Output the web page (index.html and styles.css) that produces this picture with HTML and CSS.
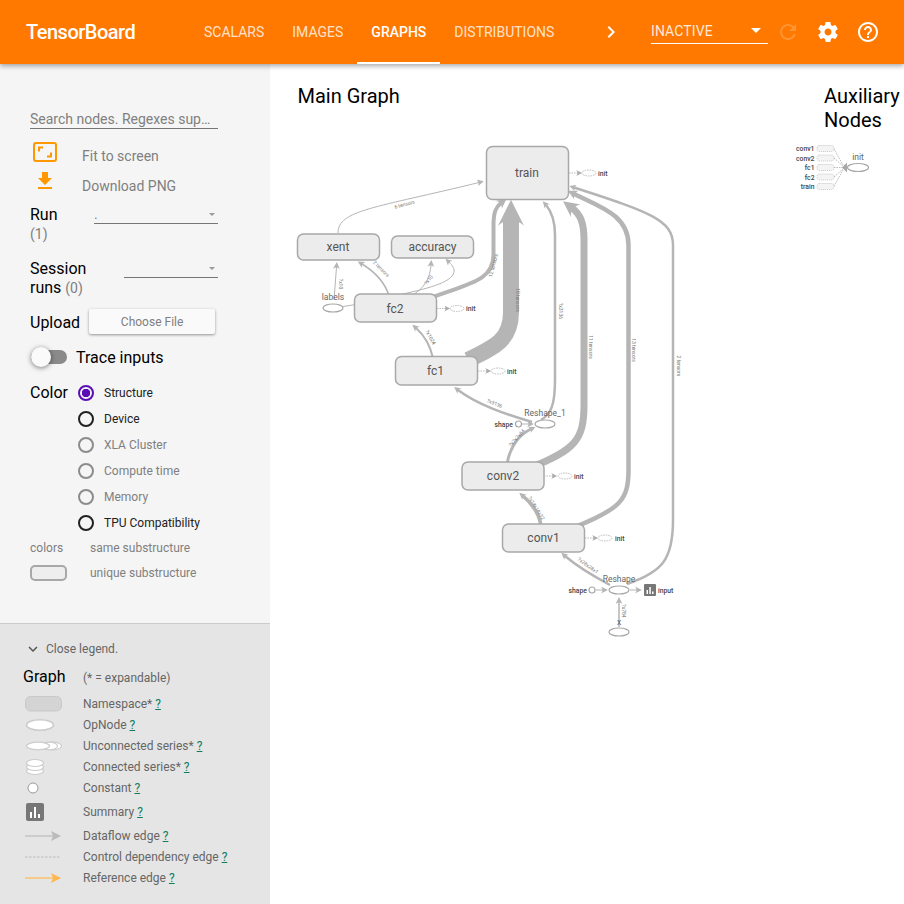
FILE: index.html
```html
<!DOCTYPE html>
<html lang="en">
<head>
    <meta charset="UTF-8">
    <meta name="viewport" content="width=device-width, initial-scale=1.0">
    <title>TensorBoard</title>
    <link rel="stylesheet" href="styles.css">
</head>
<body>

    <header class="topbar">
        <div class="brand">TensorBoard</div>
        <nav class="tabs">
            <a class="tab">SCALARS</a>
            <a class="tab">IMAGES</a>
            <a class="tab active">GRAPHS</a>
            <a class="tab">DISTRIBUTIONS</a>
        </nav>
        <svg class="more" viewBox="0 0 24 24"><path d="M10 6L8.59 7.41 13.17 12l-4.58 4.59L10 18l6-6z"/></svg>
        <div class="plugin-select">
            <span>INACTIVE</span>
            <i class="caret caret-white"></i>
        </div>
        <svg class="top-icon faded" viewBox="0 0 24 24"><path d="M17.65 6.35C16.2 4.9 14.21 4 12 4c-4.42 0-7.99 3.58-7.99 8s3.57 8 7.99 8c3.73 0 6.84-2.55 7.73-6h-2.08c-.82 2.33-3.04 4-5.65 4-3.31 0-6-2.69-6-6s2.69-6 6-6c1.66 0 3.14.69 4.22 1.78L13 11h7V4l-2.35 2.35z"/></svg>
        <svg class="top-icon" viewBox="0 0 24 24"><path d="M19.43 12.98c.04-.32.07-.64.07-.98s-.03-.66-.07-.98l2.11-1.65c.19-.15.24-.42.12-.64l-2-3.46c-.12-.22-.39-.3-.61-.22l-2.49 1c-.52-.4-1.08-.73-1.69-.98l-.38-2.65C14.46 2.18 14.25 2 14 2h-4c-.25 0-.46.18-.49.42l-.38 2.65c-.61.25-1.17.59-1.69.98l-2.49-1c-.23-.09-.49 0-.61.22l-2 3.46c-.13.22-.07.49.12.64l2.11 1.65c-.04.32-.07.65-.07.98s.03.66.07.98l-2.11 1.65c-.19.15-.24.42-.12.64l2 3.46c.12.22.39.3.61.22l2.49-1c.52.4 1.08.73 1.69.98l.38 2.65c.03.24.24.42.49.42h4c.25 0 .46-.18.49-.42l.38-2.65c.61-.25 1.17-.59 1.69-.98l2.49 1c.23.09.49 0 .61-.22l2-3.46c.12-.22.07-.49-.12-.64l-2.11-1.65zM12 15.5c-1.93 0-3.5-1.57-3.5-3.5s1.57-3.5 3.5-3.5 3.5 1.57 3.5 3.5-1.57 3.5-3.5 3.5z"/></svg>
        <svg class="top-icon" viewBox="0 0 24 24"><path d="M11 18h2v-2h-2v2zm1-16C6.48 2 2 6.48 2 12s4.48 10 10 10 10-4.48 10-10S17.52 2 12 2zm0 18c-4.41 0-8-3.59-8-8s3.59-8 8-8 8 3.59 8 8-3.59 8-8 8zm0-14c-2.21 0-4 1.79-4 4h2c0-1.1.9-2 2-2s2 .9 2 2c0 2-3 1.75-3 5h2c0-2.25 3-2.5 3-5 0-2.21-1.79-4-4-4z"/></svg>
    </header>

    <div class="layout">
        <aside class="sidebar">
            <div class="controls">
                <div class="search">Search nodes. Regexes sup…</div>

                <div class="action action-fit">
                    <svg class="action-icon" viewBox="0 0 24 20"><rect x="1" y="1" width="22" height="18" rx="2" class="fit-frame"/><path d="M5 4.5h5v2H7v3H5zM19 15.5h-5v-2h3v-3h2z" class="fit-corner"/></svg>
                    <span>Fit to screen</span>
                </div>
                <div class="action action-download">
                    <svg class="action-icon" viewBox="0 0 24 24"><path d="M19 9h-4V3H9v6H5l7 7 7-7zM5 18v2h14v-2H5z" class="fit-corner"/></svg>
                    <span>Download PNG</span>
                </div>

                <div class="field field-run">
                    <div class="field-label">Run<small>(1)</small></div>
                    <div class="dropdown dropdown-run">.<i class="caret"></i></div>
                </div>
                <div class="field field-session">
                    <div class="field-label">Session<br>runs <small class="inline">(0)</small></div>
                    <div class="dropdown dropdown-session"><i class="caret"></i></div>
                </div>

                <div class="upload">
                    <span>Upload</span>
                    <div class="file-button">Choose File</div>
                </div>

                <div class="trace">
                    <div class="toggle"><i></i></div>
                    <span>Trace inputs</span>
                </div>

                <div class="color-group">
                    <span class="color-title">Color</span>
                    <ul class="radios">
                        <li class="checked"><i></i>Structure</li>
                        <li class="enabled"><i></i>Device</li>
                        <li><i></i>XLA Cluster</li>
                        <li><i></i>Compute time</li>
                        <li><i></i>Memory</li>
                        <li class="enabled"><i></i>TPU Compatibility</li>
                    </ul>
                </div>

                <div class="colors-row colors-row-text"><span>colors</span><span>same substructure</span></div>
                <div class="colors-row"><i class="swatch"></i><span>unique substructure</span></div>
            </div>

            <section class="legend">
                <div class="legend-toggle">
                    <svg viewBox="0 0 24 24"><path d="M16.59 8.59L12 13.17 7.41 8.59 6 10l6 6 6-6z"/></svg>
                    <span>Close legend.</span>
                </div>
                <div class="legend-head"><strong>Graph</strong><span>(* = expandable)</span></div>

                <div class="legend-row">
                    <svg viewBox="0 0 40 18"><rect x="2.500" y="1.500" width="36" height="14.500" rx="5" fill="#d4d4d4" stroke="#c9c9c9" stroke-width="1"/></svg>
                    <span>Namespace* <a>?</a></span>
                </div>
                <div class="legend-row">
                    <svg viewBox="0 0 40 18"><ellipse cx="17" cy="9" rx="13.500" ry="5.200" fill="#fff" stroke="#ccc" stroke-width="1.500"/></svg>
                    <span>OpNode <a>?</a></span>
                </div>
                <div class="legend-row">
                    <svg viewBox="0 0 40 18"><g fill="#fff" stroke="#ccc" stroke-width="1.200"><ellipse cx="30" cy="9" rx="8.500" ry="3.800"/><ellipse cx="26" cy="9" rx="8.500" ry="3.800"/><ellipse cx="15" cy="9" rx="11.500" ry="3.800"/></g></svg>
                    <span>Unconnected series* <a>?</a></span>
                </div>
                <div class="legend-row">
                    <svg viewBox="0 0 40 18"><g fill="#fff" stroke="#ccc" stroke-width="1.200"><ellipse cx="12" cy="13" rx="8.500" ry="3.500"/><ellipse cx="12" cy="9" rx="8.500" ry="3.500"/><ellipse cx="12" cy="5" rx="8.500" ry="3.500"/></g></svg>
                    <span>Connected series* <a>?</a></span>
                </div>
                <div class="legend-row">
                    <svg viewBox="0 0 40 18"><circle cx="10" cy="9" r="5" fill="#fff" stroke="#999"/></svg>
                    <span>Constant <a>?</a></span>
                </div>
                <div class="legend-row legend-row-tall">
                    <svg viewBox="0 0 40 18"><rect x="3" y="0" width="18" height="18" rx="2" fill="#777"/><path d="M7 9h2v6H7zM11 4h2v11h-2zM15 11h2v4h-2z" fill="#fff"/></svg>
                    <span>Summary <a>?</a></span>
                </div>
                <div class="legend-row">
                    <svg viewBox="0 0 40 18"><path d="M2 9H31" stroke="#bbb" stroke-width="1.200"/><path d="M28 4l10 5-10 5 2-5z" fill="#bbb"/></svg>
                    <span>Dataflow edge <a>?</a></span>
                </div>
                <div class="legend-row">
                    <svg viewBox="0 0 40 18"><path d="M2 9H38" stroke="#bbb" stroke-width="1.200" stroke-dasharray="2.500 1.500"/></svg>
                    <span>Control dependency edge <a>?</a></span>
                </div>
                <div class="legend-row">
                    <svg viewBox="0 0 40 18"><path d="M2 9H31" stroke="#ffb74d" stroke-width="1.200"/><path d="M28 4l10 5-10 5 2-5z" fill="#ffb74d"/></svg>
                    <span>Reference edge <a>?</a></span>
                </div>
            </section>
        </aside>

        <main class="canvas">
            <div class="canvas-headings">
                <h2>Main Graph</h2>
                <h2 class="aux-title">Auxiliary Nodes</h2>
            </div>

            <svg class="graph" viewBox="270 64 634 840">
                <defs>
                    <marker id="arrow-sm" markerUnits="userSpaceOnUse" viewBox="0 0 10 10" refX="3" refY="5" markerWidth="8" markerHeight="7" orient="auto"><path d="M0 0L10 5L0 10C3 7 3 3 0 0" fill="#b5b5b5"/></marker>
                    <marker id="arrow-md" markerUnits="userSpaceOnUse" viewBox="0 0 10 10" refX="3" refY="5" markerWidth="11" markerHeight="10" orient="auto"><path d="M0 0L10 5L0 10C3 7 3 3 0 0" fill="#b5b5b5"/></marker>
                    <marker id="arrow-lg" markerUnits="userSpaceOnUse" viewBox="0 0 10 10" refX="3" refY="5" markerWidth="18" markerHeight="16" orient="auto"><path d="M0 0L10 5L0 10C3 7 3 3 0 0" fill="#b5b5b5"/></marker>
                    <marker id="arrow-xl" markerUnits="userSpaceOnUse" viewBox="0 0 10 10" refX="3" refY="5" markerWidth="26" markerHeight="26" orient="auto"><path d="M0 0L10 5L0 10C3 7 3 3 0 0" fill="#b5b5b5"/></marker>
                    <marker id="arrow-ctl" markerUnits="userSpaceOnUse" viewBox="0 0 10 10" refX="3" refY="5" markerWidth="6" markerHeight="6" orient="auto"><path d="M0 0L10 5L0 10C3 7 3 3 0 0" fill="#aaa"/></marker>
                </defs>

                <!-- dataflow edges -->
                <g class="edges">
                    <path d="M338 233C338 210 375 208 479 182.500" stroke-width="1" marker-end="url(#arrow-sm)"/>
                    <path d="M430 298C470 283 493 281 493.500 255V225C493.500 212 496 207 501 203" stroke-width="4" marker-end="url(#arrow-md)"/>
                    <path d="M468 360C495 347 511 340 511 312V218" stroke-width="16" marker-end="url(#arrow-xl)"/>
                    <path d="M541 420C551 414 555 405 555 380V235C555 220 552 212 546 205" stroke-width="2.500" marker-end="url(#arrow-sm)"/>
                    <path d="M530 468C575 450 584 440 584 405V240C584 222 580 214 572 208" stroke-width="7" marker-end="url(#arrow-lg)"/>
                    <path d="M575 527C620 509 628.500 500 628.500 470V245C628.500 215 600 207 574 194" stroke-width="4.500" marker-end="url(#arrow-md)"/>
                    <path d="M627 584C662 572 673 560 673 520V245C673 220 650 212 574 187.500" stroke-width="2.500" marker-end="url(#arrow-sm)"/>

                    <path d="M433 358C430 345 424 335 416 328" stroke-width="2" marker-end="url(#arrow-sm)"/>
                    <path d="M389 296C385 282 375 272 362 264" stroke-width="1.500" marker-end="url(#arrow-sm)"/>
                    <path d="M411 296C425 288 430 278 431 265" stroke-width="1" marker-end="url(#arrow-sm)"/>
                    <path d="M394 296C430 288 468 280 449 262" stroke-width="1" marker-end="url(#arrow-sm)"/>
                    <path d="M334 300L336.500 267" stroke-width="1" marker-end="url(#arrow-sm)"/>
                    <path d="M343 306.500L356 304.500" stroke-width="1"/>

                    <path d="M532 422C505 414 478 405 458 390" stroke-width="2.500" marker-end="url(#arrow-sm)"/>
                    <path d="M507 464C510 446 520 434 531 429" stroke-width="3" marker-end="url(#arrow-sm)"/>
                    <path d="M541 526C539 512 530 502 523 496" stroke-width="3.500" marker-end="url(#arrow-sm)"/>
                    <path d="M610 585C595 577 578 567 565 556" stroke-width="2.500" marker-end="url(#arrow-sm)"/>
                    <path d="M522 424H529" stroke-width="1" marker-end="url(#arrow-sm)"/>
                    <path d="M596 590H603" stroke-width="1" marker-end="url(#arrow-sm)"/>
                    <path d="M630 590H637" stroke-width="1" marker-end="url(#arrow-sm)"/>
                    <path d="M619 627V602" stroke-width="1.500" marker-end="url(#arrow-sm)"/>
                </g>

                <!-- edge sizes -->
                <g class="edge-labels">
                    <text transform="translate(405 206) rotate(-15)">6 tensors</text>
                    <text transform="translate(495 266) rotate(-75)">12 tensors</text>
                    <text transform="translate(516 300) rotate(90)">10 tensors</text>
                    <text transform="translate(559 311) rotate(90)">?x3136</text>
                    <text transform="translate(589 347) rotate(90)">11 tensors</text>
                    <text transform="translate(632 350) rotate(90)">13 tensors</text>
                    <text transform="translate(677 366) rotate(90)">2 tensors</text>
                    <text transform="translate(429 338) rotate(62)">?x1024</text>
                    <text transform="translate(494 405) rotate(22)">?x3136</text>
                    <text transform="translate(518 439) rotate(-48)">?x7x7x64</text>
                    <text transform="translate(535 509) rotate(58)">?x14x14x32</text>
                    <text transform="translate(587 567) rotate(36)">?x28x28x1</text>
                    <text transform="translate(622 611) rotate(90)">?x784</text>
                    <text transform="translate(339 284) rotate(90)">?x10</text>
                    <text transform="translate(380 270) rotate(45)">2 tensors</text>
                    <text transform="translate(430 281) rotate(-50)">?x10</text>
                </g>

                <!-- namespace nodes -->
                <g class="nodes">
                    <rect x="486.500" y="146.500" width="82" height="53" rx="6"/>
                    <rect x="297.500" y="234" width="82" height="26" rx="6"/>
                    <rect x="391.500" y="236" width="82" height="22" rx="6"/>
                    <rect x="354.500" y="294" width="82" height="28" rx="6"/>
                    <rect x="395.500" y="356.500" width="82" height="28.500" rx="6"/>
                    <rect x="462" y="462" width="82" height="28" rx="6"/>
                    <rect x="502.500" y="524" width="82" height="28" rx="6"/>
                </g>
                <g class="node-names">
                    <text x="527" y="177">train</text>
                    <text x="338" y="251">xent</text>
                    <text x="432.500" y="251">accuracy</text>
                    <text x="395" y="313">fc2</text>
                    <text x="435.500" y="375">fc1</text>
                    <text x="503" y="480">conv2</text>
                    <text x="543.500" y="542">conv1</text>
                </g>

                <!-- op nodes -->
                <g class="ops">
                    <ellipse cx="333" cy="308" rx="10" ry="4"/>
                    <ellipse cx="545" cy="424" rx="10" ry="4"/>
                    <ellipse cx="619" cy="590" rx="10" ry="4"/>
                    <ellipse cx="619" cy="632" rx="10" ry="4"/>
                    <circle cx="518.500" cy="424" r="3"/>
                    <circle cx="592" cy="590" r="3"/>
                </g>
                <g class="op-names">
                    <text x="333" y="300">labels</text>
                    <text x="545" y="416">Reshape_1</text>
                    <text x="619" y="582">Reshape</text>
                    <text x="619" y="625">x</text>
                </g>

                <!-- summary input -->
                <rect x="644" y="584" width="12" height="12" rx="1" fill="#777"/>
                <path d="M646.500 590h1.500v4h-1.500zM649.300 587h1.500v7h-1.500zM652 591.500h1.500v2.500H652z" fill="#fff"/>

                <!-- init stubs -->
                <g class="ctl">
                    <path d="M569 173H578" marker-end="url(#arrow-ctl)"/>
                    <ellipse cx="589" cy="173" rx="7" ry="3"/>
                    <path d="M437 308.500H446" marker-end="url(#arrow-ctl)"/>
                    <ellipse cx="457" cy="308.500" rx="7" ry="3"/>
                    <path d="M478 371H487" marker-end="url(#arrow-ctl)"/>
                    <ellipse cx="498" cy="371" rx="7" ry="3"/>
                    <path d="M544 476H553" marker-end="url(#arrow-ctl)"/>
                    <ellipse cx="565" cy="476" rx="7" ry="3"/>
                    <path d="M585 538H594" marker-end="url(#arrow-ctl)"/>
                    <ellipse cx="605" cy="538" rx="7" ry="3"/>
                </g>
                <g class="stub-names">
                    <text x="598" y="175.500">init</text>
                    <text x="466" y="311">init</text>
                    <text x="507" y="373.500">init</text>
                    <text x="574" y="478.500">init</text>
                    <text x="615" y="540.500">init</text>
                    <text x="658" y="592.500">input</text>
                    <text x="513" y="426.500" class="end">shape</text>
                    <text x="587" y="592.500" class="end">shape</text>
                </g>

                <!-- auxiliary nodes -->
                <g class="ctl">
                    <path d="M834 149L843 165M834 158L843 166M834 167.500H843M834 177L843 169M834 186L843 170"/>
                </g>
                <g class="aux-stubs">
                    <rect x="817" y="145.500" width="17" height="6" rx="2.500"/>
                    <rect x="817" y="155" width="17" height="6" rx="2.500"/>
                    <rect x="817" y="164.500" width="17" height="6" rx="2.500"/>
                    <rect x="817" y="174" width="17" height="6" rx="2.500"/>
                    <rect x="817" y="183.500" width="17" height="6" rx="2.500"/>
                </g>
                <path d="M842 167.500L847 162.500V172.500Z" fill="#a8a8a8"/>
                <ellipse cx="858" cy="167.500" rx="10.500" ry="4" class="aux-op"/>
                <g class="stub-names">
                    <text x="814.500" y="150.500" class="end">conv1</text>
                    <text x="814.500" y="160.500" class="end">conv2</text>
                    <text x="814.500" y="169.500" class="end">fc1</text>
                    <text x="814.500" y="179.500" class="end">fc2</text>
                    <text x="814.500" y="188.500" class="end">train</text>
                </g>
                <text x="858" y="159.500" class="aux-name">init</text>
            </svg>
        </main>
    </div>

</body>
</html>
```

FILE: styles.css
```css
* {
    box-sizing: border-box;
}

html, body {
    margin: 0;
    height: 100%;
}

body {
    font-family: Roboto, "Liberation Sans", sans-serif;
    width: 904px;
    height: 904px;
    overflow: hidden;
    background: #fff;
    display: flex;
    flex-direction: column;
}

/* top bar */
.topbar {
    height: 64px;
    flex: none;
    background: #ff7900;
    color: #fff;
    display: flex;
    align-items: center;
    padding-left: 26px;
    box-shadow: 0 2px 5px rgba(0, 0, 0, 0.35);
    position: relative;
    z-index: 2;
}

.brand {
    font-size: 20px;
    font-weight: 500;
    letter-spacing: -0.5px;
    width: 164px;
    flex: none;
}

.tabs {
    display: flex;
    height: 64px;
    width: 404px;
    flex: none;
}

.tab {
    font-size: 14px;
    font-weight: 400;
    color: rgba(255, 255, 255, 0.8);
    padding: 0 14px;
    display: flex;
    align-items: center;
    border-bottom: 2px solid transparent;
    border-top: 2px solid transparent;
}

.tab.active {
    color: #fff;
    font-weight: 500;
    border-bottom-color: #fff;
}

.more {
    width: 24px;
    height: 24px;
    fill: #fff;
    flex: none;
    margin-left: 5px;
}

.plugin-select {
    width: 117px;
    height: 29px;
    margin-left: 28px;
    border-bottom: 1px solid #fff;
    display: flex;
    align-items: center;
    justify-content: space-between;
    font-size: 14px;
    letter-spacing: 0.1px;
    color: rgba(255, 255, 255, 0.85);
    padding: 3px 7px 0 0;
    flex: none;
    position: relative;
    top: -2.500px;
}

.caret {
    width: 0;
    height: 0;
    border-left: 5px solid transparent;
    border-right: 5px solid transparent;
    border-top: 5px solid #808080;
    display: block;
}

.caret-white {
    border-top-color: #fff;
}

.top-icon {
    width: 24px;
    height: 24px;
    fill: #fff;
    flex: none;
    margin-left: 16px;
}

.top-icon.faded {
    opacity: 0.2;
    margin-left: 8px;
}

/* sidebar */
.layout {
    flex: 1;
    display: flex;
    min-height: 0;
}

.sidebar {
    width: 270px;
    flex: none;
    background: #f5f5f5;
    display: flex;
    flex-direction: column;
}

.controls {
    flex: 1;
    padding: 47px 52px 0 30px;
    font-size: 14px;
    color: #808080;
}

.search {
    height: 18px;
    line-height: 17px;
    border-bottom: 1px solid #757575;
    white-space: nowrap;
}

.action {
    display: flex;
    align-items: center;
    height: 30px;
    padding-left: 3px;
}

.action-fit {
    margin-top: 12px;
}

.action-icon {
    width: 24px;
    height: 24px;
    margin-right: 25px;
    flex: none;
}

.action-fit .action-icon {
    height: 20px;
    margin-top: -8px;
}

.action-download .action-icon {
    margin-top: -10px;
}

.fit-frame {
    fill: none;
    stroke: #ff9800;
    stroke-width: 2;
}

.fit-corner {
    fill: #ff9800;
}

.field {
    display: flex;
    justify-content: space-between;
    color: #000;
    font-size: 16px;
}

.field-run {
    margin-top: 4px;
    height: 54px;
}

.field-session {
    height: 50px;
}

.field-label {
    line-height: 19px;
}

.field-label small {
    display: block;
    font-size: 14px;
    color: #808080;
    margin-top: 1px;
}

.field-label small.inline {
    display: inline;
}

.dropdown {
    position: relative;
    height: 19px;
    border-bottom: 1px solid #757575;
    font-size: 14px;
    color: #808080;
    line-height: 19px;
}

.dropdown .caret {
    position: absolute;
    right: 3px;
    top: 8px;
    border-width: 3.500px 3.500px 0;
    border-top-color: #999;
    border-left-color: transparent;
    border-right-color: transparent;
}

.dropdown-run {
    width: 124px;
}

.dropdown-session {
    width: 94px;
}

.upload {
    display: flex;
    align-items: center;
    color: #000;
    font-size: 16px;
    height: 25px;
}

.upload span {
    padding-top: 2px;
}

.file-button {
    width: 126px;
    height: 25px;
    margin-left: 9px;
    background: #fafafa;
    border-radius: 2px;
    box-shadow: 0 1px 3px rgba(0, 0, 0, 0.4);
    font-size: 12px;
    color: #808080;
    display: flex;
    align-items: center;
    justify-content: center;
    flex: none;
}

.trace {
    display: flex;
    align-items: center;
    margin-top: 12px;
    color: #000;
    font-size: 16px;
    height: 22px;
}

.toggle {
    width: 36px;
    height: 14px;
    border-radius: 7px;
    background: #8a8a8a;
    position: relative;
    margin: 0 9px 0 1px;
    flex: none;
}

.toggle i {
    position: absolute;
    left: 0;
    top: -3px;
    width: 20px;
    height: 20px;
    border-radius: 50%;
    background: #fafafa;
    box-shadow: 0 1px 5px rgba(0, 0, 0, 0.5);
}

.color-group {
    display: flex;
    margin-top: 12px;
}

.color-title {
    color: #000;
    font-size: 16px;
    line-height: 26px;
    width: 48px;
    flex: none;
}

.radios {
    list-style: none;
    margin: 0;
    padding: 0;
    font-size: 12px;
    white-space: nowrap;
}

.radios li {
    height: 26px;
    display: flex;
    align-items: center;
    color: #808080;
}

.radios li i {
    width: 16px;
    height: 16px;
    border-radius: 50%;
    border: 2px solid #8c8c8c;
    margin-right: 10px;
    flex: none;
}

.radios li.enabled,
.radios li.checked {
    color: #212121;
}

.radios li.enabled i {
    border-color: #212121;
}

.radios li.checked i {
    border-color: #5a0fb4;
    background: radial-gradient(circle, #5a0fb4 0 4px, transparent 4.500px);
}

.colors-row {
    display: flex;
    align-items: center;
    font-size: 12px;
    white-space: nowrap;
    height: 16px;
    margin-top: 9px;
}

.colors-row-text {
    margin-top: 4px;
}

.colors-row span:first-child {
    width: 60px;
    flex: none;
}

.swatch {
    width: 37px;
    height: 16px;
    margin-right: 23px;
    border-radius: 5px;
    border: 2px solid #a8a8a8;
    background: #eee;
    flex: none;
}

/* legend */
.legend {
    height: 281px;
    flex: none;
    background: #e5e5e5;
    border-top: 1px solid #ccc;
    padding: 15px 0 0 23px;
    font-size: 12px;
    color: #666;
}

.legend-toggle {
    display: flex;
    align-items: center;
    height: 20px;
}

.legend-toggle svg {
    width: 18px;
    height: 18px;
    fill: #555;
    margin-right: 4px;
    margin-left: 1px;
}

.legend-head {
    display: flex;
    align-items: baseline;
    height: 30px;
    margin-top: 4px;
    line-height: 28px;
}

.legend-head strong {
    font-weight: 400;
    font-size: 16px;
    color: #000;
    width: 60px;
}

.legend-row {
    height: 21px;
    display: flex;
    align-items: center;
}

.legend-row-tall {
    height: 27px;
}

.legend-row svg {
    width: 40px;
    height: 18px;
    margin-right: 20px;
    flex: none;
    overflow: visible;
}

.legend-row a {
    color: #0f7d5c;
    text-decoration: underline;
}

/* graph canvas */
.canvas {
    flex: 1;
    position: relative;
    min-width: 0;
}

.canvas-headings {
    display: flex;
    justify-content: space-between;
    padding: 20px 0 0 27.500px;
}

.canvas h2 {
    margin: 0;
    font-size: 20px;
    font-weight: 400;
    line-height: 24px;
    color: #000;
}

.aux-title {
    width: 80px;
}

.graph {
    position: absolute;
    left: 0;
    top: 0;
    width: 634px;
    height: 840px;
    font-family: Roboto, "Liberation Sans", sans-serif;
}

.edges path {
    fill: none;
    stroke: #b5b5b5;
}

.edge-labels text {
    font-size: 5px;
    fill: #777;
    text-anchor: middle;
}

.nodes rect {
    fill: #ececec;
    stroke: #a8a8a8;
    stroke-width: 1.500;
}

.node-names text {
    font-size: 12px;
    fill: #555;
    text-anchor: middle;
}

.ops ellipse, .ops circle, .aux-op {
    fill: #fff;
    stroke: #a8a8a8;
    stroke-width: 1.200;
}

.op-names text, .aux-name {
    font-size: 8.500px;
    fill: #666;
    text-anchor: middle;
}

.ctl path, .ctl ellipse {
    fill: none;
    stroke: #bbb;
    stroke-width: 1;
    stroke-dasharray: 1.500 1;
}

.aux-stubs rect {
    fill: #f4f4f4;
    stroke: #bbb;
    stroke-width: 0.800;
    stroke-dasharray: 1 1;
}

.stub-names text {
    font-size: 6.800px;
    font-weight: 500;
    fill: #444;
}

.stub-names text.end {
    text-anchor: end;
}
```
